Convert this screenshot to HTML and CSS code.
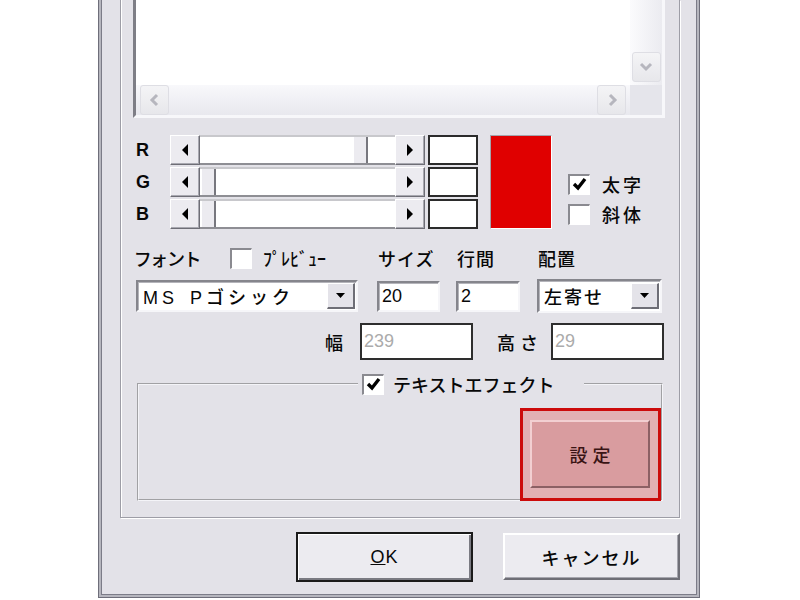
FILE: index.html
```html
<!DOCTYPE html>
<html lang="ja">
<head>
<meta charset="utf-8">
<title>テキスト設定</title>
<link rel="stylesheet" href="styles.css">
</head>
<body>
<div class="dialog">
  <div class="group">
    <div class="memo">
      <div class="memo-main">
        <div class="memo-text"></div>
        <div class="vscroll">
          <div class="xpbtn"><svg width="18" height="18" viewBox="0 0 18 18"><polyline points="4,6 9,11 14,6" fill="none" stroke="#b6b6be" stroke-width="3"/></svg></div>
        </div>
      </div>
      <div class="memo-bottom">
        <div class="hscroll">
          <div class="xpbtn"><svg width="18" height="18" viewBox="0 0 18 18"><polyline points="11,4 6,9 11,14" fill="none" stroke="#b6b6be" stroke-width="3"/></svg></div>
          <div class="xpbtn"><svg width="18" height="18" viewBox="0 0 18 18"><polyline points="7,4 12,9 7,14" fill="none" stroke="#b6b6be" stroke-width="3"/></svg></div>
        </div>
        <div class="corner"></div>
      </div>
    </div>

    <div class="colors">
      <div class="sliders">
        <div class="slider-row">
          <span class="ch">R</span>
          <div class="sb">
            <div class="sb-btn"><svg width="8" height="12" viewBox="0 0 8 12"><path d="M7 0V12L1 6Z" fill="#000"/></svg></div>
            <div class="sb-track"><div class="sb-thumb" style="margin-left:153px"></div></div>
            <div class="sb-btn"><svg width="8" height="12" viewBox="0 0 8 12"><path d="M1 0V12L7 6Z" fill="#000"/></svg></div>
          </div>
          <div class="swatch"></div>
        </div>
        <div class="slider-row">
          <span class="ch">G</span>
          <div class="sb">
            <div class="sb-btn"><svg width="8" height="12" viewBox="0 0 8 12"><path d="M7 0V12L1 6Z" fill="#000"/></svg></div>
            <div class="sb-track"><div class="sb-thumb" style="margin-left:1px"></div></div>
            <div class="sb-btn"><svg width="8" height="12" viewBox="0 0 8 12"><path d="M1 0V12L7 6Z" fill="#000"/></svg></div>
          </div>
          <div class="swatch"></div>
        </div>
        <div class="slider-row">
          <span class="ch">B</span>
          <div class="sb">
            <div class="sb-btn"><svg width="8" height="12" viewBox="0 0 8 12"><path d="M7 0V12L1 6Z" fill="#000"/></svg></div>
            <div class="sb-track"><div class="sb-thumb" style="margin-left:1px"></div></div>
            <div class="sb-btn"><svg width="8" height="12" viewBox="0 0 8 12"><path d="M1 0V12L7 6Z" fill="#000"/></svg></div>
          </div>
          <div class="swatch"></div>
        </div>
      </div>
      <div class="preview"></div>
      <div class="styles">
        <div class="chk"><span class="cb"><svg width="18" height="17" viewBox="0 0 18 17"><path d="M3 8 L7 12 L14 3" fill="none" stroke="#000" stroke-width="3.4"/></svg></span><span>太字</span></div>
        <div class="chk"><span class="cb"></span><span>斜体</span></div>
      </div>
    </div>

    <div class="fmt fmt-labels">
      <div class="cell-font"><span class="lbl-font">フォント</span><span class="cb"></span><span class="preview-lbl">ﾌﾟﾚﾋﾞｭｰ</span></div>
      <div class="lbl">サイズ</div>
      <div class="lbl">行間</div>
      <div class="lbl">配置</div>
    </div>

    <div class="fmt fmt-inputs">
      <div class="combo combo-font"><span class="combo-text">MS Pゴシック</span><span class="dd"><svg width="9" height="5" viewBox="0 0 9 5"><path d="M0 0H9L4.5 5Z" fill="#000"/></svg></span></div>
      <div class="field field-size">20</div>
      <div class="field field-line">2</div>
      <div class="combo combo-align"><span class="combo-text">左寄せ</span><span class="dd"><svg width="9" height="5" viewBox="0 0 9 5"><path d="M0 0H9L4.5 5Z" fill="#000"/></svg></span></div>
    </div>

    <div class="dims">
      <span class="dim-lbl">幅</span>
      <div class="dimbox">239</div>
      <span class="dim-lbl dim-lbl2">高さ</span>
      <div class="dimbox">29</div>
    </div>

    <fieldset class="effect">
      <legend class="effect-legend"><span class="cb"><svg width="18" height="17" viewBox="0 0 18 17"><path d="M3 8 L7 12 L14 3" fill="none" stroke="#000" stroke-width="3.4"/></svg></span><span class="legend-text">テキストエフェクト</span></legend>
      <div class="effect-body">
        <div class="highlight"><div class="set-btn">設定</div></div>
      </div>
    </fieldset>
  </div>

  <div class="buttons">
    <div class="btn btn-default"><span><u>O</u>K</span></div>
    <div class="btn btn-cancel">キャンセル</div>
  </div>
</div>
</body>
</html>
```

FILE: styles.css
```css
* { box-sizing: border-box; }
html, body { margin: 0; padding: 0; }
body {
  width: 800px;
  height: 600px;
  overflow: hidden;
  background: #ffffff;
  font-family: "Liberation Sans", "Noto Sans CJK JP", sans-serif;
  font-size: 18px;
  font-weight: 500;
  color: #080808;
  letter-spacing: 2px;
}

.dialog {
  margin-left: 98px;
  width: 602px;
  height: 598px;
  background: #e3e2e8;
  border: 1px solid #6e6e7a;
  border-top: 0;
  box-shadow: inset 2px 0 #b6b6be, inset -2px 0 #b6b6be, inset 0 -2px #b6b6be,
              inset 3px 0 #7c7c88, inset -3px 0 #7c7c88, inset 0 -3px #7c7c88;
  padding: 0 19px 0 21px;
}

.group {
  height: 518px;
  border: 1px solid #9d9da6;
  border-top: 0;
  box-shadow: inset 1px 0 #ffffff, 1px 1px #ffffff;
}

/* memo / text area */
.memo {
  margin-left: 12px;
  width: 532px;
  height: 118px;
  border-style: solid;
  border-width: 0 3px 3px 3px;
  border-color: transparent #f7f7fa #f7f7fa #7e7e86;
  display: flex;
  flex-direction: column;
}
.memo-main { display: flex; height: 85px; }
.memo-text { flex: 1; background: #ffffff; }
.vscroll {
  width: 32px;
  background: linear-gradient(90deg, #fbfbfd, #ebebf0);
  display: flex;
  flex-direction: column;
  justify-content: flex-end;
  align-items: center;
  padding-bottom: 3px;
}
.xpbtn {
  width: 29px;
  height: 30px;
  border: 1px solid #dedee4;
  border-radius: 3px;
  background: linear-gradient(#f4f4f6, #e7e7eb);
  display: flex;
  align-items: center;
  justify-content: center;
}
.memo-bottom { display: flex; height: 30px; }
.hscroll {
  flex: 1;
  display: flex;
  justify-content: space-between;
  align-items: center;
  padding: 0 4px;
  background: linear-gradient(#f8f8fb, #e8e8ee);
}
.corner { width: 32px; background: #e5e5eb; }

/* color section */
.colors { display: flex; margin: 17px 0 0 14px; }
.sliders { display: flex; flex-direction: column; gap: 2px; }
.slider-row { display: flex; height: 30px; }
.ch { width: 35px; display: flex; align-items: center; font-size: 18px; font-weight: 700; letter-spacing: 0; padding-left: 1px; }
.sb { display: flex; width: 255px; }
.sb-btn {
  width: 30px;
  background: #ecebf0;
  border: 1px solid;
  border-color: #ffffff #6e6e76 #6e6e76 #ffffff;
  box-shadow: inset -1px -1px #a8a8b0;
  display: flex;
  align-items: center;
  justify-content: center;
}
.sb-track {
  flex: 1;
  background: #ffffff;
  border-top: 2px solid #c8c8cc;
  border-bottom: 2px solid #8e8e94;
  display: flex;
}
.sb-thumb {
  width: 15px;
  background: #ecebf0;
  border-left: 1px solid #ffffff;
  border-right: 2px solid #77777e;
}
.swatch { width: 50px; margin-left: 3px; border: 2px solid #2b2b2b; background: #ffffff; }
.preview {
  width: 62px;
  height: 94px;
  margin-left: 12px;
  background: #e00000;
  border: 1px solid;
  border-color: #a4a4ac #ffffff #ffffff #a4a4ac;
}
.styles { margin-left: 16px; padding-top: 38px; display: flex; flex-direction: column; gap: 8px; }
.chk { display: flex; align-items: center; gap: 12px; height: 22px; letter-spacing: 3px; }

.cb {
  width: 22px;
  height: 21px;
  flex: none;
  background: #ffffff;
  border-style: solid;
  border-width: 2px 1px 1px 2px;
  border-color: #8a8a90 #ffffff #ffffff #8a8a90;
  display: flex;
  align-items: center;
  justify-content: center;
}

/* format rows */
.fmt { display: grid; grid-template-columns: 242px 79px 81px 125px; margin-left: 14px; }
.fmt-labels { margin-top: 16px; height: 25px; align-items: center; }
.cell-font { display: flex; align-items: center; }
.lbl-font { width: 95px; font-feature-settings: "palt"; }
.preview-lbl { margin-left: 11px; letter-spacing: 0; }
.lbl { padding-left: 1px; letter-spacing: 1px; }

.fmt-inputs { margin-top: 9px; height: 34px; align-items: center; }
.combo, .field {
  background: #ffffff;
  border-style: solid;
  border-width: 2px;
  border-color: #85858c #f6f6f9 #f6f6f9 #85858c;
  box-shadow: inset 1px 1px #b4b4ba;
  display: flex;
  align-items: center;
}
.combo-font { margin-left: 1px; width: 222px; height: 32px; }
.combo-align { width: 125px; height: 34px; }
.combo-text { flex: 1; padding-left: 5px; }
.combo-font .combo-text { letter-spacing: 4px; word-spacing: 3px; }
.dd {
  width: 28px;
  height: 26px;
  margin-right: 1px;
  background: #e4e3e9;
  border-style: solid;
  border-width: 1px 2px 2px 1px;
  border-color: #ffffff #6e6e76 #6e6e76 #ffffff;
  display: flex;
  align-items: center;
  justify-content: center;
}
.field { height: 31px; padding-left: 3px; letter-spacing: 0; }
.field-size { width: 63px; }
.field-line { width: 64px; }

.dims { display: flex; align-items: center; margin-top: 10px; padding-left: 204px; height: 37px; }
.dim-lbl { width: 35px; }
.dim-lbl2 { width: 54px; margin-left: 24px; letter-spacing: 5px; }
.dimbox {
  width: 113px;
  height: 37px;
  border: 2px solid #2e2e2e;
  background: #ffffff;
  color: #ababab;
  font-weight: 400;
  padding-left: 2px;
  display: flex;
  align-items: center;
  letter-spacing: 0;
}

/* effect group */
.effect {
  margin: 13px 0 0 16px;
  width: 526px;
  min-width: 0;
  padding: 0;
  border: 2px groove #f4f4f8;
}
.effect-legend {
  margin-left: 219px;
  padding: 0 30px 0 4px;
  height: 22px;
  display: flex;
  align-items: center;
  gap: 9px;
}
.legend-text { letter-spacing: 0; }
.effect-body { height: 104px; display: flex; justify-content: flex-end; align-items: flex-end; }
.highlight {
  width: 141px;
  height: 93px;
  margin-bottom: -2px;
  border: 3px solid #cc0b0b;
  background: #e2b0b3;
  padding: 9px 8px 10px 7px;
}
.set-btn {
  height: 100%;
  background: #d99c9f;
  border: 2px solid;
  border-color: #f2cfd1 #8c6064 #8c6064 #f2cfd1;
  display: flex;
  align-items: center;
  justify-content: center;
  color: #3a1414;
  letter-spacing: 5px;
  padding-left: 5px;
}

/* dialog buttons */
.buttons { display: flex; justify-content: flex-end; align-items: flex-start; gap: 30px; margin-top: 14px; }
.btn {
  width: 177px;
  height: 47px;
  background: #ecebf0;
  border: 2px solid;
  border-color: #ffffff #6e6e76 #6e6e76 #ffffff;
  box-shadow: inset -1px -1px #a6a6ae;
  display: flex;
  align-items: center;
  justify-content: center;
}
.btn-default {
  height: 50px;
  border: 2px solid #1a1a1a;
  box-shadow: inset 1px 1px #ffffff, inset -2px -2px #7a7a82;
  letter-spacing: 1px;
}
.btn-cancel { margin-top: 1px; }
```
